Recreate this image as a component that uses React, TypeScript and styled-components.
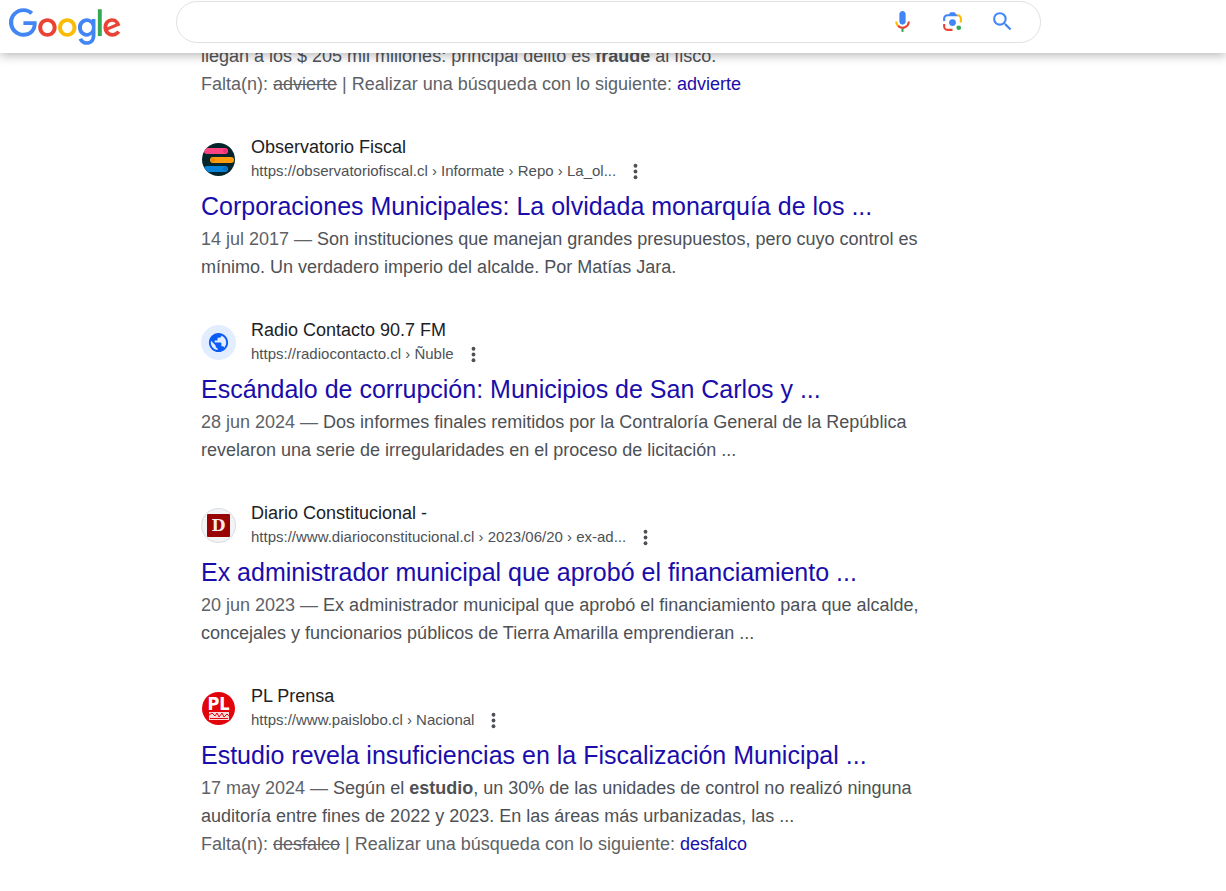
import React from "react";
import styled, { createGlobalStyle } from "styled-components";

const GlobalStyle = createGlobalStyle`
  * { box-sizing: border-box; }
  body {
    margin: 0;
    background: #fff;
    color: #4d5156;
    font-family: "Liberation Sans", Arial, sans-serif;
    font-size: 18px;
    line-height: 28px;
  }
`;

const Header = styled.header`
  position: fixed;
  inset: 0 0 auto 0;
  z-index: 1;
  display: flex;
  align-items: flex-start;
  gap: 54px;
  padding: 1px 16px 7px 8px;
  background: #fff;
  box-shadow: 0 2px 10px rgba(32, 33, 36, 0.34);
`;

const LogoLink = styled.a`
  flex: none;
  padding-top: 7px;
  line-height: 0;
`;

const SearchForm = styled.form`
  display: flex;
  align-items: center;
  flex: 1;
  min-width: 0;
  max-width: 865px;
  height: 42px;
  padding: 0 13px 2px 20px;
  border: 1px solid #dfe1e5;
  border-radius: 21px;
  background: #fff;
`;

const SearchInput = styled.input`
  flex: 1;
  min-width: 0;
  height: 36px;
  padding: 0;
  border: 0;
  outline: 0;
  background: transparent;
  font: inherit;
  color: #202124;
`;

const IconButton = styled.button`
  display: flex;
  align-items: center;
  justify-content: center;
  width: 50px;
  height: 38px;
  padding: 0;
  border: 0;
  background: transparent;
  cursor: pointer;
`;

const Results = styled.main`
  display: flex;
  flex-direction: column;
  gap: 37px;
  max-width: 942px;
  padding: 42px 16px 32px 201px;
`;

const Result = styled.article``;

const Source = styled.div`
  display: flex;
  align-items: center;
  gap: 15px;
`;

const Favicon = styled.span<{ $fill?: string; $outlined?: boolean }>`
  display: flex;
  align-items: center;
  justify-content: center;
  flex: none;
  width: 35px;
  height: 35px;
  border: 1px solid ${(p) => (p.$outlined ? "#dadce0" : p.$fill ?? "#fff")};
  border-radius: 50%;
  background: ${(p) => p.$fill ?? "#fff"};
`;

const SourceText = styled.div`
  min-width: 0;
  line-height: 24px;
`;

const SiteName = styled.div`
  color: #202124;
`;

const UrlRow = styled.div`
  display: flex;
  align-items: center;
  gap: 8px;
  height: 24px;
  font-size: 15px;
`;

const Url = styled.cite`
  font-style: normal;
`;

const MenuButton = styled.button`
  display: flex;
  padding: 0;
  border: 0;
  background: transparent;
  cursor: pointer;
`;

const Title = styled.h3`
  margin: 7px 0 3px;
  font-size: 25px;
  font-weight: 400;
  line-height: 32px;
`;

const Link = styled.a`
  color: #1a0dab;
  text-decoration: none;
`;

const Snippet = styled.p`
  margin: 0;
`;

const Muted = styled.span`
  color: #5e6267;
`;

const Logo = () => (
  <svg width="114" height="38" viewBox="0 0 272 92" role="img" aria-label="Google">
    <path fill="#EA4335" d="M115.75 47.18c0 12.77-9.99 22.18-22.25 22.18s-22.25-9.41-22.25-22.18C71.25 34.32 81.24 25 93.5 25s22.25 9.32 22.25 22.18zm-9.74 0c0-7.98-5.79-13.44-12.51-13.44S80.99 39.2 80.99 47.18c0 7.9 5.79 13.44 12.51 13.44s12.51-5.55 12.51-13.44z" />
    <path fill="#FBBC05" d="M163.75 47.18c0 12.77-9.99 22.18-22.25 22.18s-22.25-9.41-22.25-22.18c0-12.85 9.99-22.18 22.25-22.18s22.25 9.32 22.25 22.18zm-9.74 0c0-7.98-5.79-13.44-12.51-13.44s-12.51 5.46-12.51 13.44c0 7.9 5.79 13.44 12.51 13.44s12.51-5.55 12.51-13.44z" />
    <path fill="#4285F4" d="M209.75 26.34v39.82c0 16.38-9.66 23.07-21.08 23.07-10.75 0-17.22-7.19-19.66-13.07l8.48-3.53c1.51 3.61 5.21 7.87 11.17 7.87 7.31 0 11.84-4.51 11.84-13v-3.19h-.34c-2.18 2.69-6.38 5.04-11.68 5.04-11.09 0-21.25-9.66-21.25-22.09 0-12.52 10.16-22.26 21.25-22.26 5.29 0 9.49 2.35 11.68 4.96h.34v-3.61h9.25zm-8.56 20.92c0-7.81-5.21-13.52-11.84-13.52-6.72 0-12.35 5.71-12.35 13.52 0 7.73 5.63 13.36 12.35 13.36 6.63 0 11.84-5.63 11.84-13.36z" />
    <path fill="#34A853" d="M225 3v65h-9.5V3h9.5z" />
    <path fill="#EA4335" d="M262.02 54.48l7.56 5.04c-2.44 3.61-8.32 9.83-18.48 9.83-12.6 0-22.01-9.74-22.01-22.18 0-13.19 9.49-22.18 20.92-22.18 11.51 0 17.14 9.16 18.98 14.11l1.01 2.52-29.65 12.28c2.27 4.45 5.8 6.72 10.75 6.72 4.96 0 8.4-2.44 10.92-6.14zm-23.27-7.98l19.82-8.23c-1.09-2.77-4.37-4.7-8.23-4.7-4.95 0-11.84 4.37-11.59 12.93z" />
    <path fill="#4285F4" d="M35.29 41.41V32H67c.31 1.64.47 3.58.47 5.68 0 7.06-1.93 15.79-8.15 22.01-6.05 6.3-13.78 9.66-24.02 9.66C16.32 69.35.36 53.89.36 34.91.36 15.93 16.32.47 35.3.47c10.5 0 17.98 4.12 23.6 9.49l-6.64 6.64c-4.03-3.78-9.49-6.72-16.97-6.72-13.86 0-24.7 11.17-24.7 25.03 0 13.86 10.84 25.03 24.7 25.03 8.99 0 14.11-3.61 17.39-6.89 2.66-2.66 4.41-6.46 5.1-11.65l-22.49.01z" />
  </svg>
);

const MicIcon = () => (
  <svg width="25" height="25" viewBox="0 0 24 24" aria-hidden="true">
    <path fill="#4285f4" d="m12 15c1.66 0 3-1.31 3-2.97v-7.02c0-1.66-1.34-3.01-3-3.01s-3 1.34-3 3.01v7.02c0 1.66 1.34 2.97 3 2.97z" />
    <path fill="#34a853" d="m11 18.08h2v3.92h-2z" />
    <path fill="#fbbc04" d="m7.05 16.87c-1.27-1.33-2.05-2.83-2.05-4.87h2c0 1.45 0.56 2.42 1.47 3.38v0.32l-1.15 1.18z" />
    <path fill="#ea4335" d="m12 16.93a4.97 5.25 0 0 1 -3.54 -1.55l-1.41 1.49c1.26 1.34 3.02 2.13 4.95 2.13 3.87 0 6.99-2.92 6.99-7h-1.99c0 2.92-2.24 4.93-5 4.93z" />
  </svg>
);

const LensIcon = () => (
  <svg width="25" height="25" viewBox="0 0 192 192" aria-hidden="true">
    <circle fill="#34a853" cx="144" cy="144" r="18" />
    <circle fill="#4285f4" cx="96" cy="104" r="26" />
    <path fill="#ea4335" d="M24 135.2c0 18.11 14.69 32.8 32.8 32.8H96v-16l-40.1-.1c-8.8 0-15.9-8.19-15.9-17.9v-18H24v19.2z" />
    <path fill="#fbbc04" d="M168 72.8c0-18.11-14.69-32.8-32.8-32.8H116l20 16c8.8 0 16 8.29 16 18v30h16V72.8z" />
    <path fill="#4285f4" d="M112 24H80L68 40H56.8C38.69 40 24 54.69 24 72.8V92h16V74c0-9.71 7.2-18 16-18h80l-12-16-12-16z" />
  </svg>
);

const SearchIcon = () => (
  <svg width="25" height="25" viewBox="0 0 24 24" aria-hidden="true">
    <path fill="#4285f4" d="M15.5 14h-.79l-.28-.27A6.471 6.471 0 0 0 16 9.5 6.5 6.5 0 1 0 9.5 16c1.61 0 3.09-.59 4.23-1.57l.27.28v.79l5 4.99L20.49 19l-4.99-5zm-6 0C7.01 14 5 11.99 5 9.5S7.01 5 9.5 5 14 7.01 14 9.5 11.99 14 9.5 14z" />
  </svg>
);

const MoreIcon = () => (
  <svg width="23" height="23" viewBox="0 0 24 24" fill="#4d5156" aria-hidden="true">
    <circle cx="12" cy="6" r="2" />
    <circle cx="12" cy="12" r="2" />
    <circle cx="12" cy="18" r="2" />
  </svg>
);

const ObservatorioIcon = () => (
  <svg width="33" height="33" viewBox="0 0 33 33" aria-hidden="true">
    <defs>
      <clipPath id="disc">
        <circle cx="16.5" cy="16.5" r="16.5" />
      </clipPath>
    </defs>
    <g clipPath="url(#disc)">
      <rect width="33" height="33" fill="#03252b" />
      <rect x="2" y="5" width="24" height="6" rx="3" fill="#fd4480" />
      <rect x="8" y="14" width="24" height="6" rx="3" fill="#ff9c0b" />
      <rect x="2" y="23" width="24" height="6" rx="3" fill="#0b83d9" />
      <circle cx="23" cy="8" r="2" fill="#e92f70" />
      <circle cx="11" cy="17" r="2" fill="#f08800" />
      <circle cx="23" cy="26" r="2" fill="#0670c4" />
    </g>
  </svg>
);

const GlobeIcon = () => (
  <svg width="23" height="23" viewBox="0 0 24 24" aria-hidden="true">
    <path fill="#0b5cf5" d="M12 2C6.48 2 2 6.48 2 12s4.48 10 10 10 10-4.48 10-10S17.52 2 12 2zm-1 17.93c-3.95-.49-7-3.85-7-7.93 0-.62.08-1.21.21-1.79L9 15v1c0 1.1.9 2 2 2v1.93zm6.9-2.54c-.26-.81-1-1.39-1.9-1.39h-1v-3c0-.55-.45-1-1-1H8v-2h2c.55 0 1-.45 1-1V7h2c1.1 0 2-.9 2-2v-.41c2.93 1.19 5 4.06 5 7.41 0 2.08-.8 3.97-2.1 5.39z" />
  </svg>
);

const DiarioIcon = () => (
  <svg width="23" height="23" viewBox="0 0 23 23" aria-hidden="true">
    <rect width="23" height="23" rx="1" fill="#980303" />
    <text x="11.5" y="17" textAnchor="middle" fill="#f5e9e9" fontFamily="DejaVu Serif, serif" fontWeight="700" fontSize="16">D</text>
  </svg>
);

const PrensaIcon = () => (
  <svg width="33" height="33" viewBox="0 0 33 33" aria-hidden="true">
    <circle cx="16.5" cy="16.5" r="16.5" fill="#e2040b" />
    <text x="16.5" y="18" textAnchor="middle" fill="#fff" fontFamily="DejaVu Sans Condensed, DejaVu Sans, sans-serif" fontWeight="700" fontSize="18">PL</text>
    <rect x="7" y="20" width="20" height="8" fill="#fff" opacity="0.85" />
    <path d="M7 23l3-2 3 3 2-3 2 4 3-4 2 4 3-3 2 2M8 26.500h18" fill="none" stroke="#e2040b" strokeWidth="1" />
  </svg>
);

const MissingTerm = ({ term }: { term: string }) => (
  <Snippet as="div">
    <Muted>
      Falta(n): <s>{term}</s> | Realizar una búsqueda con lo siguiente:
    </Muted>{" "}
    <Link href="#">{term}</Link>
  </Snippet>
);

type ResultData = {
  icon: React.ReactNode;
  fill?: string;
  outlined?: boolean;
  site: string;
  url: string;
  title: string;
  date: string;
  text: React.ReactNode;
  missing?: string;
};

const results: ResultData[] = [
  {
    icon: <ObservatorioIcon />,
    site: "Observatorio Fiscal",
    url: "https://observatoriofiscal.cl › Informate › Repo › La_ol...",
    title: "Corporaciones Municipales: La olvidada monarquía de los ...",
    date: "14 jul 2017",
    text: "Son instituciones que manejan grandes presupuestos, pero cuyo control es mínimo. Un verdadero imperio del alcalde. Por Matías Jara.",
  },
  {
    icon: <GlobeIcon />,
    fill: "#e2edff",
    site: "Radio Contacto 90.7 FM",
    url: "https://radiocontacto.cl › Ñuble",
    title: "Escándalo de corrupción: Municipios de San Carlos y ...",
    date: "28 jun 2024",
    text: "Dos informes finales remitidos por la Contraloría General de la República revelaron una serie de irregularidades en el proceso de licitación ...",
  },
  {
    icon: <DiarioIcon />,
    fill: "#f1f3f4",
    outlined: true,
    site: "Diario Constitucional -",
    url: "https://www.diarioconstitucional.cl › 2023/06/20 › ex-ad...",
    title: "Ex administrador municipal que aprobó el financiamiento ...",
    date: "20 jun 2023",
    text: "Ex administrador municipal que aprobó el financiamiento para que alcalde, concejales y funcionarios públicos de Tierra Amarilla emprendieran ...",
  },
  {
    icon: <PrensaIcon />,
    site: "PL Prensa",
    url: "https://www.paislobo.cl › Nacional",
    title: "Estudio revela insuficiencias en la Fiscalización Municipal ...",
    date: "17 may 2024",
    text: (
      <>
        Según el <b>estudio</b>, un 30% de las unidades de control no realizó ninguna auditoría entre fines de 2022 y
        2023. En las áreas más urbanizadas, las ...
      </>
    ),
    missing: "desfalco",
  },
];

export default function App() {
  return (
    <>
      <GlobalStyle />
      <Header>
        <LogoLink href="#">
          <Logo />
        </LogoLink>
        <SearchForm role="search" onSubmit={(e) => e.preventDefault()}>
          <SearchInput type="text" aria-label="Buscar" />
          <IconButton type="button" aria-label="Buscar por voz">
            <MicIcon />
          </IconButton>
          <IconButton type="button" aria-label="Buscar por imagen">
            <LensIcon />
          </IconButton>
          <IconButton type="submit" aria-label="Buscar">
            <SearchIcon />
          </IconButton>
        </SearchForm>
      </Header>
      <Results>
        <Result>
          <Snippet>
            llegan a los $ 205 mil millones: principal delito es <b>fraude</b> al fisco.
          </Snippet>
          <MissingTerm term="advierte" />
        </Result>
        {results.map((r) => (
          <Result key={r.site}>
            <Source>
              <Favicon $fill={r.fill} $outlined={r.outlined}>
                {r.icon}
              </Favicon>
              <SourceText>
                <SiteName>{r.site}</SiteName>
                <UrlRow>
                  <Url>{r.url}</Url>
                  <MenuButton type="button" aria-label="Acerca de este resultado">
                    <MoreIcon />
                  </MenuButton>
                </UrlRow>
              </SourceText>
            </Source>
            <Title>
              <Link href="#">{r.title}</Link>
            </Title>
            <Snippet>
              <Muted>{r.date} — </Muted>
              {r.text}
            </Snippet>
            {r.missing && <MissingTerm term={r.missing} />}
          </Result>
        ))}
      </Results>
    </>
  );
}
